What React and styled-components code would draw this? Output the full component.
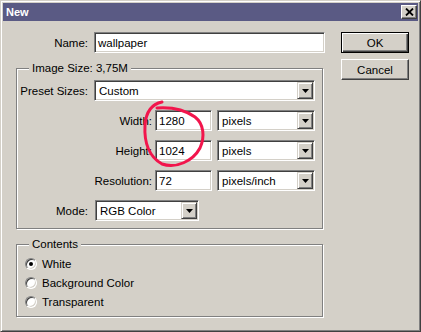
import React from 'react';
import styled, { createGlobalStyle } from 'styled-components';

const GlobalStyle = createGlobalStyle`
  html, body {
    margin: 0;
    padding: 0;
    background: #d4d0c8;
  }
  body {
    font-family: "Liberation Sans", Arial, sans-serif;
    font-size: 11.5px;
    color: #000;
  }
`;

const App = () => {
  return (
    <>
      <GlobalStyle />
      <Window>
        <TitleBar>
          <Title>New</Title>
          <CloseButton>
            <svg width="9" height="8" viewBox="0 0 9 8">
              <path d="M1,0.5 L8,7.5 M8,0.5 L1,7.5" stroke="#000" strokeWidth="1.8" fill="none" />
            </svg>
          </CloseButton>
        </TitleBar>

        <Body>
          <Main>
            <Row>
              <Label width={72} gap={6}>Name:</Label>
              <Field width={231}>wallpaper</Field>
            </Row>

            <Group top={11} bottom={7} gap={9} first>
              <GroupTitle>Image Size: 3,75M</GroupTitle>
              <Row>
                <Label width={71} gap={6}>Preset Sizes:</Label>
                <Dropdown width={221} value="Custom" />
              </Row>
              <Row>
                <Label width={135} gap={3}>Width:</Label>
                <Field width={57}>1280</Field>
                <Spacer />
                <Dropdown width={98} value="pixels" />
              </Row>
              <Row>
                <Label width={135} gap={3}>Height:</Label>
                <Field width={57}>1024</Field>
                <Spacer />
                <Dropdown width={98} value="pixels" />
              </Row>
              <Row>
                <Label width={135} gap={3}>Resolution:</Label>
                <Field width={57}>72</Field>
                <Spacer />
                <Dropdown width={98} value="pixels/inch" />
              </Row>
              <Row>
                <Label width={71} gap={7}>Mode:</Label>
                <Dropdown width={104} value="RGB Color" />
              </Row>
            </Group>

            <Group top={9} bottom={5} gap={0} left={8}>
              <GroupTitle>Contents</GroupTitle>
              <RadioRow>
                <Radio><Dot /></Radio>
                White
              </RadioRow>
              <RadioRow>
                <Radio />
                Background Color
              </RadioRow>
              <RadioRow>
                <Radio />
                Transparent
              </RadioRow>
            </Group>
          </Main>

          <Side>
            <Button primary>OK</Button>
            <Button>Cancel</Button>
          </Side>
        </Body>

        <Scribble width="421" height="332" viewBox="0 0 421 332">
          <path
            d="M162,102 C152,104 146,112 145,125 C144,142 149,157 162,164 C176,169 193,161 200,148 C205,137 204,124 195,117 C185,110 171,107 157,108"
            stroke="#f2154c"
            strokeWidth="3"
            strokeLinecap="round"
            strokeLinejoin="round"
            fill="none"
          />
        </Scribble>
      </Window>
    </>
  );
};

const Dropdown = ({ width, value }) => (
  <Select width={width}>
    <SelectText>{value}</SelectText>
    <DropButton>
      <svg width="7" height="4" viewBox="0 0 7 4">
        <path d="M0,0 H7 L3.5,4 Z" fill="#000" />
      </svg>
    </DropButton>
  </Select>
);

const Window = styled.div`
  position: relative;
  width: 421px;
  height: 332px;
  box-sizing: border-box;
  padding: 2px;
  background: #d4d0c8;
  border: 1px solid;
  border-color: #d4d0c8 #404040 #404040 #d4d0c8;
  box-shadow: inset 1px 1px 0 #fff, inset -1px -1px 0 #808080;
`;

const TitleBar = styled.div`
  display: flex;
  align-items: center;
  justify-content: space-between;
  height: 18px;
  padding: 0 1px 0 3px;
  background: #5a5a84;
`;

const Title = styled.span`
  color: #fff;
  font-weight: bold;
  font-size: 11px;
`;

const CloseButton = styled.div`
  display: flex;
  align-items: center;
  justify-content: center;
  width: 16px;
  height: 14px;
  box-sizing: border-box;
  background: #d4d0c8;
  border: 1px solid;
  border-color: #fff #404040 #404040 #fff;
  box-shadow: inset -1px -1px 0 #808080;
`;

const Body = styled.div`
  display: flex;
  gap: 16px;
  padding: 11px 0 0 13px;
`;

const Main = styled.div`
  display: flex;
  flex-direction: column;
  width: 309px;
`;

const Side = styled.div`
  display: flex;
  flex-direction: column;
  gap: 6px;
`;

const Row = styled.div`
  display: flex;
  align-items: center;
  height: 21px;
`;

const Label = styled.div`
  width: ${p => p.width}px;
  margin-right: ${p => p.gap}px;
  text-align: right;
  white-space: nowrap;
`;

const Spacer = styled.div`
  width: 5px;
`;

const Field = styled.div`
  display: flex;
  align-items: center;
  width: ${p => p.width}px;
  height: 21px;
  box-sizing: border-box;
  padding: 0 3px;
  background: #fff;
  border: 1px solid;
  border-color: #808080 #fff #fff #808080;
  box-shadow: inset 1px 1px 0 #404040, inset -1px -1px 0 #d4d0c8;
`;

const Select = styled.div`
  display: flex;
  width: ${p => p.width}px;
  height: 21px;
  box-sizing: border-box;
  padding: 1px;
  background: #fff;
  border: 1px solid;
  border-color: #808080 #fff #fff #808080;
  box-shadow: inset 1px 1px 0 #404040, inset -1px -1px 0 #d4d0c8;
`;

const SelectText = styled.div`
  flex: 1;
  display: flex;
  align-items: center;
  padding-left: 3px;
`;

const DropButton = styled.div`
  display: flex;
  align-items: center;
  justify-content: center;
  width: 16px;
  box-sizing: border-box;
  background: #d4d0c8;
  border: 1px solid;
  border-color: #d4d0c8 #404040 #404040 #d4d0c8;
  box-shadow: inset 1px 1px 0 #fff, inset -1px -1px 0 #808080;
`;

const Group = styled.div`
  position: relative;
  display: flex;
  flex-direction: column;
  gap: ${p => p.gap}px;
  width: 307px;
  box-sizing: border-box;
  margin-top: 15px;
  padding: ${p => p.top}px 0 ${p => p.bottom}px ${p => p.left || 0}px;
  border: 1px solid #808080;
  box-shadow: inset 1px 1px 0 #fff, 1px 1px 0 #fff;
`;

const GroupTitle = styled.span`
  position: absolute;
  top: -8px;
  left: 12px;
  padding: 0 3px;
  line-height: 14px;
  background: #d4d0c8;
`;

const RadioRow = styled.div`
  display: flex;
  align-items: center;
  gap: 5px;
  height: 19px;
`;

const Radio = styled.div`
  display: flex;
  align-items: center;
  justify-content: center;
  width: 12px;
  height: 12px;
  box-sizing: border-box;
  border-radius: 50%;
  background: #fff;
  border: 1px solid;
  border-color: #808080 #fff #fff #808080;
  box-shadow: inset 1px 1px 0 #404040, inset -1px -1px 0 #d4d0c8;
`;

const Dot = styled.div`
  width: 4px;
  height: 4px;
  border-radius: 50%;
  background: #000;
`;

const Button = styled.div`
  display: flex;
  align-items: center;
  justify-content: center;
  width: 68px;
  height: 21px;
  box-sizing: border-box;
  background: #d4d0c8;
  border: 1px solid;
  border-color: ${p => (p.primary ? '#000' : '#fff #404040 #404040 #fff')};
  box-shadow: ${p =>
    p.primary
      ? 'inset 1px 1px 0 #fff, inset -1px -1px 0 #404040, inset -2px -2px 0 #808080'
      : 'inset -1px -1px 0 #808080'};
`;

const Scribble = styled.svg`
  position: absolute;
  top: -1px;
  left: -1px;
  pointer-events: none;
`;

export default App;
